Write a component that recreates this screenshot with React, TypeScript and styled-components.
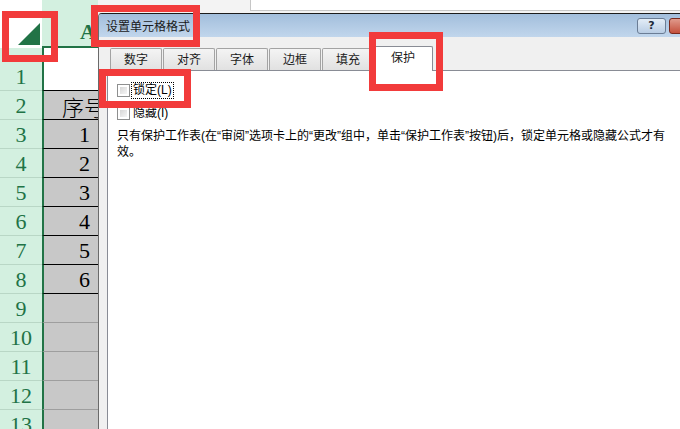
import React from 'react';
import styled, { createGlobalStyle } from 'styled-components';

const GlobalStyle = createGlobalStyle`
  html, body {
    margin: 0;
    padding: 0;
    background: #fff;
  }
`;

const rows = [
  { n: 1, value: '', kind: 'top' },
  { n: 2, value: '序号', kind: 'title' },
  { n: 3, value: '1', kind: 'data' },
  { n: 4, value: '2', kind: 'data' },
  { n: 5, value: '3', kind: 'data' },
  { n: 6, value: '4', kind: 'data' },
  { n: 7, value: '5', kind: 'data' },
  { n: 8, value: '6', kind: 'data' },
  { n: 9, value: '', kind: 'empty' },
  { n: 10, value: '', kind: 'empty' },
  { n: 11, value: '', kind: 'empty' },
  { n: 12, value: '', kind: 'empty' },
  { n: 13, value: '', kind: 'empty' },
];

const tabs = ['数字', '对齐', '字体', '边框', '填充', '保护'];

export default function App() {
  return (
    <Page>
      <GlobalStyle />
      <Sheet>
        <HeaderRow>
          <Corner>
            <svg width="22" height="22" viewBox="0 0 22 22">
              <polygon points="22,0 22,22 0,22" fill="#217346" />
            </svg>
          </Corner>
          <ColHeader>A</ColHeader>
          <TopRest>
            <FormulaBox />
          </TopRest>
        </HeaderRow>
        {rows.map((r) => (
          <Row key={r.n} $tall={r.kind === 'top'}>
            <RowHeader>{r.n}</RowHeader>
            <Cell $kind={r.kind}>{r.value}</Cell>
          </Row>
        ))}
      </Sheet>

      <Dialog>
        <TitleBar>
          <Title>设置单元格格式</Title>
          <WinButtons>
            <HelpButton>?</HelpButton>
            <CloseButton />
          </WinButtons>
        </TitleBar>
        <Body>
          <TabStrip>
            {tabs.map((t) => (
              <Tab key={t} $active={t === '保护'}>
                {t}
              </Tab>
            ))}
          </TabStrip>
          <Panel>
            <CheckRow>
              <CheckBox />
              <CheckLabel $focused>锁定(L)</CheckLabel>
            </CheckRow>
            <CheckRow>
              <CheckBox />
              <CheckLabel>隐藏(I)</CheckLabel>
            </CheckRow>
            <Note>
              只有保护工作表(在“审阅”选项卡上的“更改”组中，单击“保护工作表”按钮)后，锁定单元格或隐藏公式才有
              <br />
              效。
            </Note>
          </Panel>
        </Body>
      </Dialog>

      <Mark style={{ left: 2, top: 11, width: 56, height: 51 }} />
      <Mark style={{ left: 91, top: 5, width: 109, height: 42 }} />
      <Mark style={{ left: 99, top: 69, width: 92, height: 39 }} />
      <Mark style={{ left: 369, top: 32, width: 74, height: 59 }} />
    </Page>
  );
}

const Page = styled.div`
  position: relative;
  width: 680px;
  height: 429px;
  overflow: hidden;
  background: #fff;
  font-family: 'Liberation Sans', 'Noto Sans CJK SC', sans-serif;
`;

const Sheet = styled.div`
  display: flex;
  flex-direction: column;
`;

const HeaderRow = styled.div`
  display: flex;
  height: 48px;
`;

const Corner = styled.div`
  width: 42px;
  box-sizing: border-box;
  background: #fff;
  display: flex;
  align-items: flex-end;
  justify-content: flex-end;
  padding: 0 2px 3px 0;
`;

const ColHeader = styled.div`
  width: 56px;
  box-sizing: border-box;
  background: #d3f0e0;
  border-bottom: 2px solid #217346;
  color: #217346;
  font-family: 'Liberation Serif', serif;
  font-weight: bold;
  font-size: 22px;
  line-height: 22px;
  display: flex;
  align-items: flex-end;
  padding: 0 0 3px 38px;
`;

const TopRest = styled.div`
  flex: 1;
  background: #f3f3f3;
  display: flex;
  align-items: flex-start;
  padding-left: 152px;
`;

const FormulaBox = styled.div`
  flex: 1;
  height: 10px;
  background: #fff;
  border-left: 1px solid #c6c6c6;
  border-bottom: 1px solid #c6c6c6;
`;

const Row = styled.div<{ $tall?: boolean }>`
  display: flex;
  height: ${(p) => (p.$tall ? 43 : 29)}px;
`;

const RowHeader = styled.div`
  width: 42px;
  box-sizing: border-box;
  background: #d3f0e0;
  border-bottom: 1px solid #b9d7c6;
  color: #217346;
  font-family: 'Liberation Serif', serif;
  font-size: 22px;
  line-height: 22px;
  display: flex;
  align-items: flex-end;
  justify-content: center;
  padding-bottom: 2px;
`;

const Cell = styled.div<{ $kind: string }>`
  width: 57px;
  box-sizing: border-box;
  border-left: 2px solid #217346;
  border-right: 1px solid #000;
  border-bottom: 1px solid ${(p) => (p.$kind === 'empty' ? '#9e9e9e' : '#000')};
  background: ${(p) => (p.$kind === 'top' ? '#fff' : '#c8c8c8')};
  color: #000;
  font-family: ${(p) =>
    p.$kind === 'title' ? "'Noto Sans CJK SC', serif" : "'Liberation Serif', serif"};
  font-weight: ${(p) => (p.$kind === 'title' ? 300 : 400)};
  font-size: 22px;
  line-height: 22px;
  white-space: nowrap;
  overflow: hidden;
  display: flex;
  align-items: flex-end;
  justify-content: ${(p) => (p.$kind === 'title' ? 'flex-start' : 'flex-end')};
  padding: 0 8px 2px 18px;
`;

const Dialog = styled.div`
  position: absolute;
  left: 98px;
  top: 13px;
  width: 620px;
  height: 430px;
  box-sizing: border-box;
  border-top: 1px solid #1c1c1c;
  border-left: 1px solid #6a6a6a;
  border-top-left-radius: 4px;
  background: #f0f0f0;
  display: flex;
  flex-direction: column;
  font-size: 12px;
  color: #000;
`;

const TitleBar = styled.div`
  height: 23px;
  display: flex;
  align-items: center;
  justify-content: space-between;
  padding: 0 6px 0 7px;
  background: linear-gradient(#a2bedc, #c1d6ec);
  border-top-left-radius: 3px;
`;

const Title = styled.span`
  font-size: 12px;
  color: #1a1a1a;
`;

const WinButtons = styled.div`
  display: flex;
  gap: 3px;
  align-self: flex-start;
  margin-top: 4px;
`;

const WinButton = styled.div`
  height: 16px;
  box-sizing: border-box;
  border-radius: 3px;
`;

const HelpButton = styled(WinButton)`
  width: 29px;
  border: 1px solid #6b7d95;
  background: linear-gradient(#e3edf7, #b9cde4);
  font-family: 'DejaVu Sans', sans-serif;
  font-weight: bold;
  font-size: 11px;
  line-height: 14px;
  text-align: center;
  color: #1d2a3a;
`;

const CloseButton = styled(WinButton)`
  width: 43px;
  border: 1px solid #7a2a1e;
  background: linear-gradient(#e09a8c, #c4503c);
`;

const Body = styled.div`
  flex: 1;
  display: flex;
  flex-direction: column;
  padding-left: 8px;
`;

const TabStrip = styled.div`
  height: 33px;
  display: flex;
  align-items: flex-end;
  gap: 1px;
  padding-left: 3px;
  position: relative;
  z-index: 1;
`;

const Tab = styled.div<{ $active?: boolean }>`
  width: ${(p) => (p.$active ? 60 : 52)}px;
  height: ${(p) => (p.$active ? 25 : 22)}px;
  margin-left: ${(p) => (p.$active ? -2 : 0)}px;
  margin-bottom: ${(p) => (p.$active ? -1 : 0)}px;
  box-sizing: border-box;
  border: 1px solid ${(p) => (p.$active ? '#898c95' : '#a3a3a3')};
  border-bottom: none;
  border-radius: 2px 2px 0 0;
  background: ${(p) => (p.$active ? '#fff' : 'linear-gradient(#f4f4f4, #e1e1e1)')};
  text-align: center;
  padding-top: 3px;
  line-height: 16px;
  font-size: 12px;
  color: #1a1a1a;
`;

const Panel = styled.div`
  flex: 1;
  background: #fff;
  border-top: 1px solid #898c95;
  border-left: 1px solid #898c95;
  padding: 11px 0 0 9px;
`;

const CheckRow = styled.div`
  height: 17px;
  display: flex;
  align-items: center;
  margin-bottom: 6px;
`;

const CheckBox = styled.div`
  width: 13px;
  height: 13px;
  box-sizing: border-box;
  border: 1px solid #8e8f8f;
  background: #fff;
  padding: 2px;
  &::after {
    content: '';
    display: block;
    width: 100%;
    height: 100%;
    background: linear-gradient(135deg, #d6d6d6, #f6f6f6);
  }
`;

const CheckLabel = styled.span<{ $focused?: boolean }>`
  margin-left: 1px;
  padding: 0 1px;
  line-height: 15px;
  border: 1px dotted ${(p) => (p.$focused ? '#000' : 'transparent')};
`;

const Note = styled.div`
  margin-top: 6px;
  line-height: 16px;
  white-space: nowrap;
`;

const Mark = styled.div`
  position: absolute;
  box-sizing: border-box;
  border: 7px solid #f23b3b;
  pointer-events: none;
  z-index: 5;
`;
